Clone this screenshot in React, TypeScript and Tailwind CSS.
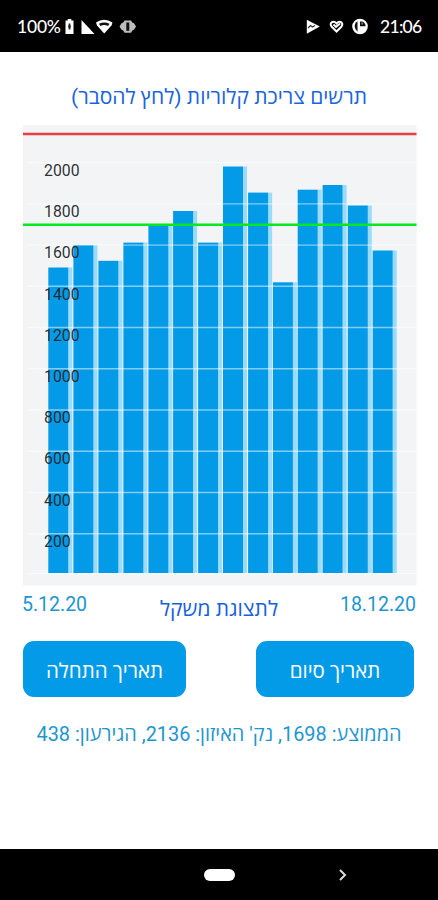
import type { ReactNode } from 'react'

const BASELINE = 573

interface Bar {
  x: number
  top: number
}

const bars: Bar[] = [
  { x: 48.3, top: 267.5 },
  { x: 73.4, top: 245 },
  { x: 98.4, top: 260.8 },
  { x: 123.4, top: 242.6 },
  { x: 148.4, top: 225 },
  { x: 173.1, top: 211 },
  { x: 198.1, top: 242.6 },
  { x: 223, top: 166.5 },
  { x: 248.1, top: 192.6 },
  { x: 272.9, top: 282.3 },
  { x: 297.7, top: 189.7 },
  { x: 322.6, top: 185 },
  { x: 347.8, top: 205.5 },
  { x: 372.7, top: 250.5 },
]

const ticks = [2000, 1800, 1600, 1400, 1200, 1000, 800, 600, 400, 200]

function StatusBar() {
  return (
    <header className="flex h-[51.5px] shrink-0 items-center justify-between bg-black pl-[17px] pr-[16px] pt-[2px] text-white">
      <div className="flex items-center">
        <span className="w-[45px] whitespace-nowrap font-['Lato'] text-[17.5px] font-medium tracking-[-0.2px]">100%</span>
        <svg width="80" height="20" viewBox="62 17 80 20" fill="#fff">
          <path d="M65.500 20.500h2.200V19h3.600v1.500h2.200V34h-8z" />
          <path d="M69.500 23.500v6" stroke="#222" strokeWidth="1.800" />
          <path d="M68.200 26.500h2.600" stroke="#222" strokeWidth="2" />
          <path d="M81.500 20v14h13z" />
          <path d="M96 22.500q8-5.500 16.500 0l-1 3L104.200 33.500 97 25.500z" />
          <path d="M99 23.800q5.200-2.400 10.400 0l-1.300 2.200q-3.900-1.800-7.800 0z" fill="#111" />
          <path d="M124.500 20.500h6.500l1.300 2 1.700.7 2 3.300-2 3.300-1.700.7-1.300 2.300h-6.500l-1.300-2.300-1.700-.7-2-3.300 2-3.300 1.700-.7z" fill="#bdbdbd" />
          <rect x="126.300" y="22.500" width="3" height="8.300" fill="#111" />
        </svg>
      </div>
      <div className="flex items-center">
        <svg width="74" height="20" viewBox="304 17 74 20" fill="#fff">
          <path d="M306.800 19.700v14l13-7.200z" />
          <path d="m308 28 2.500-2.500 2 1.500 2.500-1.500" fill="none" stroke="#333" strokeWidth="1.200" />
          <path d="m336.500 31.500-5-5q-2-3 .8-4.500 2.200-1 4.200 1.500 2-2.500 4.200-1.500 2.800 1.500.8 4.500zM333.500 24.500l2.500 2.500 4-3.500" fill="none" stroke="#fff" strokeWidth="2" />
          <circle cx="360" cy="26.500" r="7.800" />
          <path d="M357.500 21.200q-3 2-2.800 5.300.2 3.300 2.800 5.300z" fill="#111" />
          <path d="M360 21.500h2.300q3 1 3.300 4.800H360z" fill="#111" />
          <rect x="361.500" y="22.500" width="1.300" height="2" fill="#999" />
        </svg>
        <span className="w-[44px] whitespace-nowrap pl-[2px] font-['Lato'] text-[17.500px] font-medium tracking-[-0.7px]">21:06</span>
      </div>
    </header>
  )
}

function CalorieChart() {
  return (
    <svg className="ml-[23px] mt-[13px] shrink-0" width="394" height="461" viewBox="23 125 394 461">
      <rect x="23" y="125" width="393.500" height="460.500" fill="#f3f4f6" />
      {bars.map(bar => (
        <g key={bar.x}>
          <rect x={bar.x + 20} y={bar.top} width="4" height={BASELINE - bar.top} fill="#9adbfb" />
          <rect x={bar.x} y={bar.top} width="20" height={BASELINE - bar.top} fill="#039be8" />
        </g>
      ))}
      {ticks.map(tick => (
        <path key={tick} d={`M28 ${575 - tick * 0.2062}H416.500`} stroke="#fff" strokeOpacity=".5" strokeWidth="1.400" />
      ))}
      <path d="M28 573.500H416" stroke="#fff" strokeOpacity=".6" />
      {ticks.map(tick => (
        <text key={tick} x="44" y={588.2 - tick * 0.2062} fill="#202428" fillOpacity=".95" fontSize="15.800" className="font-['Roboto']">{tick}</text>
      ))}
      <path d="M23 134H416.500" stroke="#e93f41" strokeWidth="2.500" />
      <path d="M23 224.800H416.500" stroke="#06e81f" strokeWidth="2.500" />
    </svg>
  )
}

function DateButton({ className, children }: { className: string; children: ReactNode }) {
  return (
    <button className={`h-[56px] rounded-[11px] bg-[#039be8] pt-[5px] text-[20.5px] text-white ${className}`}>
      {children}
    </button>
  )
}

export default function App() {
  return (
    <div className="flex h-[900px] w-[438px] flex-col overflow-hidden bg-white font-['Roboto','Open_Sans',sans-serif]">
      <StatusBar />
      <main className="flex flex-1 flex-col">
        <h1 dir="rtl" className="mt-[30px] h-[30px] whitespace-nowrap text-center text-[21px] leading-[30px] text-[#1a64de]">
          תרשים צריכת קלוריות (לחץ להסבר)
        </h1>
        <CalorieChart />
        <div className="grid h-[55px] grid-cols-[1fr_auto_1fr] px-[22px] pt-[4px] text-[19.5px] leading-[30px] text-[#1d96d0]">
          <span>5.12.20</span>
          <span dir="rtl" className="pt-[4px] text-[21px] text-[#1560e0]">לתצוגת משקל</span>
          <span className="text-right">18.12.20</span>
        </div>
        <div dir="rtl" className="flex justify-between pl-[23px] pr-[24px]">
          <DateButton className="w-[158px]">תאריך סיום</DateButton>
          <DateButton className="w-[163px]">תאריך התחלה</DateButton>
        </div>
        <p dir="rtl" className="mt-[23px] whitespace-nowrap text-center text-[19.9px] leading-[30px] text-[#1d96d0]">
          הממוצע: 1698, נק' האיזון: 2136, הגירעון: 438
        </p>
      </main>
      <nav className="flex h-[51px] shrink-0 items-center bg-black pl-[204px]">
        <span className="h-[12px] w-[31px] rounded-full bg-white" />
        <svg className="ml-[103px]" width="10" height="14" viewBox="0 0 10 14" fill="none" stroke="#ddd" strokeWidth="2">
          <path d="m2 2 5 5-5 5" />
        </svg>
      </nav>
    </div>
  )
}
